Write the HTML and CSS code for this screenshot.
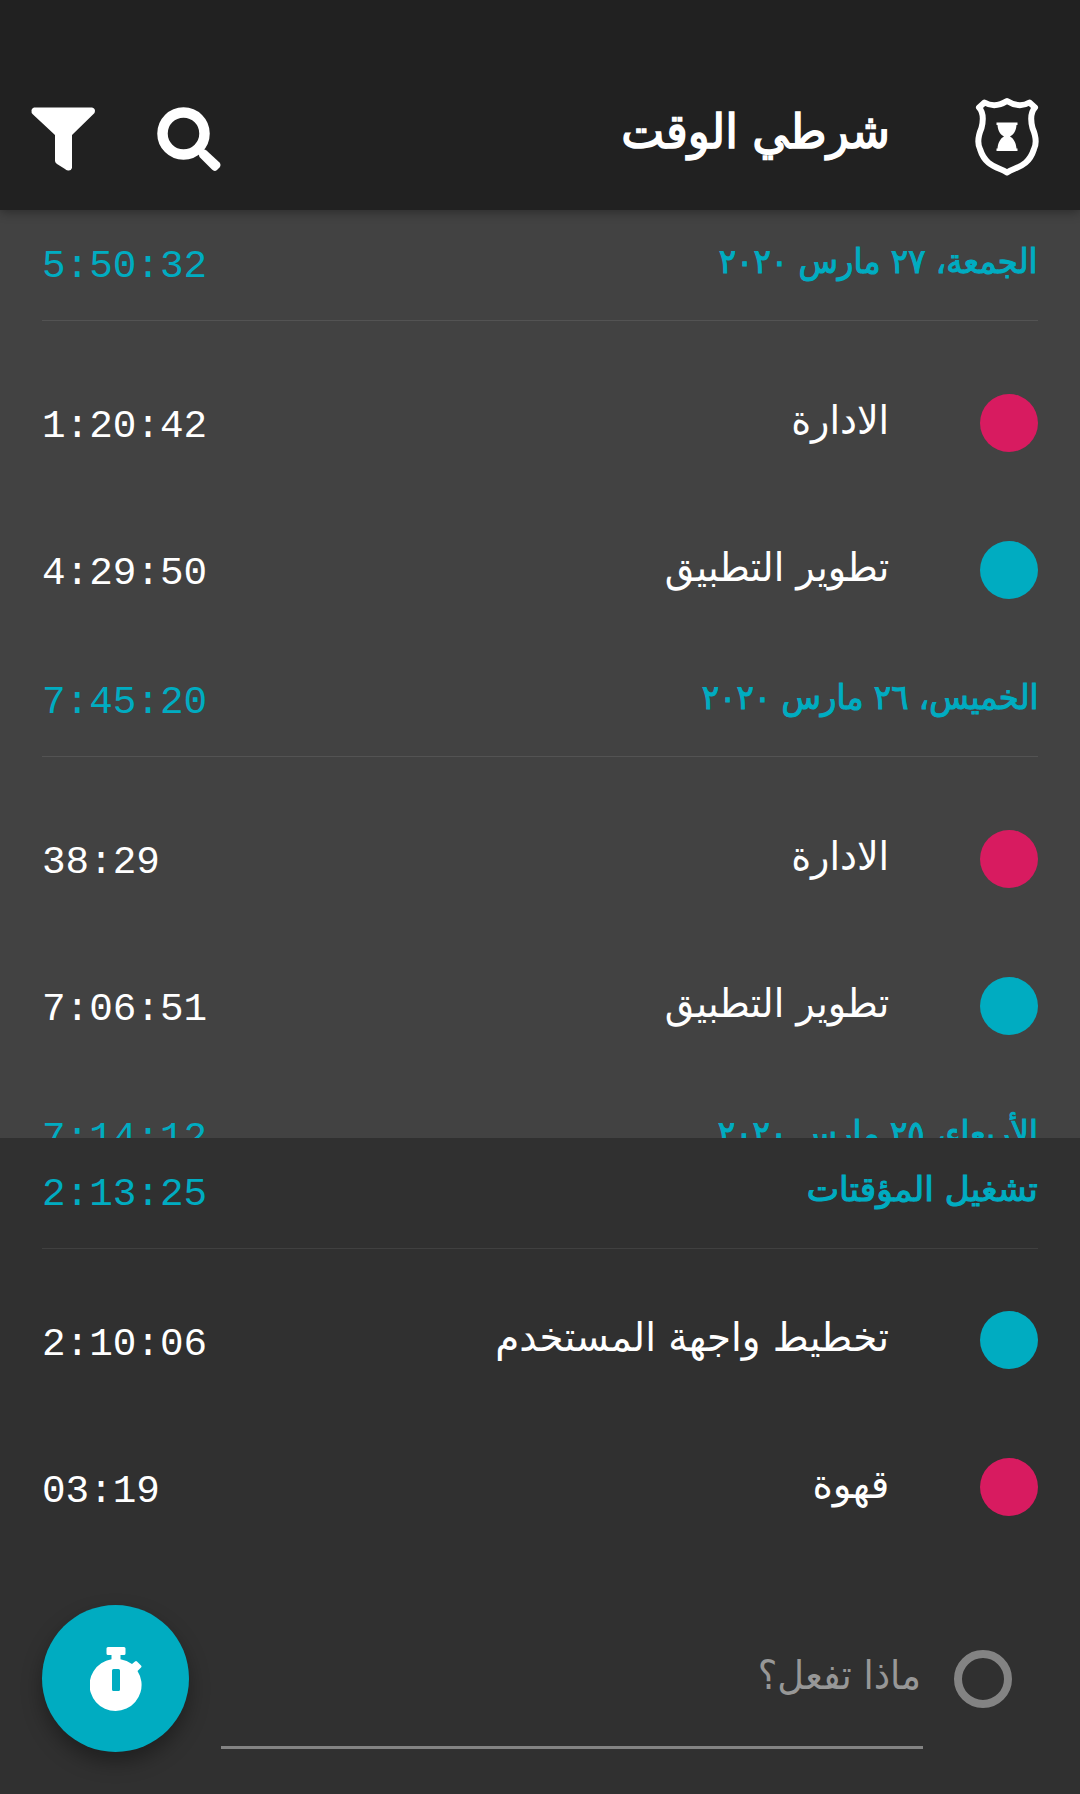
FILE: index.html
```html
<!DOCTYPE html>
<html lang="ar" dir="rtl">
<head>
    <meta charset="UTF-8">
    <title>شرطي الوقت</title>
    <meta name="viewport" content="width=device-width, initial-scale=1.0">
    <link rel="stylesheet" href="styles.css">
</head>
<body>

<header class="app-bar">
    <svg class="logo" viewBox="0 0 64 80">
        <path class="shield" d="M32 4Q20 11.500 9.500 5.500L4 10.500Q10 17 6.500 31Q1 44 5 52C9 65 17 69 25 72Q29 73.500 32 75.500Q35 73.500 39 72C47 69 55 65 59 52Q63 44 57.500 31Q54 17 60 10.500L54.500 5.500Q44 11.500 32 4Z"/>
        <path d="M21.500 25.500H42.500V28H41.500C41 35 38 38 35 39.500C38 41 41 45 41.500 51.500H42.500V54H21.500V51.500H22.500C23 45 26 41 29 39.500C26 38 23 35 22.500 28H21.500Z"/>
    </svg>
    <h1 class="title">شرطي الوقت</h1>
    <div class="actions">
        <svg class="icon" viewBox="0 0 64 64">
            <circle class="lens" cx="26.500" cy="26.500" r="21"/>
            <path d="M43 43.500Q46 41 49.500 43.500L62.500 55.500Q64.500 58 62.500 60.500L60 63Q57.500 65 55 62.500L42.500 50Q41 46 43 43.500Z"/>
        </svg>
        <svg class="icon" viewBox="0 0 64 64">
            <path d="M3 0.500H61Q64 1 64 4Q64 6 62 7.500L41 28V61Q40 64 37 63.500Q35 63 34 62L26 57Q24 55.500 24 54V28L2 7.500Q0 6 0.500 3Q1 1 3 0.500Z"/>
        </svg>
    </div>
</header>

<main class="history">
    <section class="group">
        <div class="group-header">
            <h2>الجمعة، ٢٧ مارس ٢٠٢٠</h2>
            <span class="time">5:50:32</span>
        </div>
        <ul class="timers">
            <li class="timer"><span class="dot pink"></span><span class="name">الادارة</span><span class="time">1:20:42</span></li>
            <li class="timer"><span class="dot cyan"></span><span class="name">تطوير التطبيق</span><span class="time">4:29:50</span></li>
        </ul>
    </section>
    <section class="group">
        <div class="group-header">
            <h2>الخميس، ٢٦ مارس ٢٠٢٠</h2>
            <span class="time">7:45:20</span>
        </div>
        <ul class="timers">
            <li class="timer"><span class="dot pink"></span><span class="name">الادارة</span><span class="time">38:29</span></li>
            <li class="timer"><span class="dot cyan"></span><span class="name">تطوير التطبيق</span><span class="time">7:06:51</span></li>
        </ul>
    </section>
    <section class="group">
        <div class="group-header">
            <h2>الأربعاء، ٢٥ مارس ٢٠٢٠</h2>
            <span class="time">7:14:12</span>
        </div>
    </section>
</main>

<section class="running">
    <div class="group-header">
        <h2>تشغيل المؤقتات</h2>
        <span class="time">2:13:25</span>
    </div>
    <ul class="timers">
        <li class="timer"><span class="dot cyan"></span><span class="name">تخطيط واجهة المستخدم</span><span class="time">2:10:06</span></li>
        <li class="timer"><span class="dot pink"></span><span class="name">قهوة</span><span class="time">03:19</span></li>
    </ul>
</section>

<footer class="new-timer">
    <span class="ring"></span>
    <div class="field"><span class="hint">ماذا تفعل؟</span></div>
    <button class="start-btn" aria-label="ابدأ">
        <svg class="stopwatch" viewBox="0 0 52 64">
            <path fill-rule="evenodd" d="M18 0H34Q35.500 0 35.500 1.500V6.500Q35.500 8 34 8H30.500V12.300Q37 13.500 42 17L45 14.500Q46 13.500 47 14.500L51 18.500Q52 19.500 51 20.500L47.500 24A26 26 0 1 1 21.500 12.300V8H18Q16.500 8 16.500 6.500V1.500Q16.500 0 18 0ZM23.500 22Q22 22 22 23.500V42.500Q22 44 23.500 44H28.500Q30 44 30 42.500V23.500Q30 22 28.500 22Z"/>
        </svg>
    </button>
</footer>

</body>
</html>
```
FILE: styles.css
```css
* {
    margin: 0;
    padding: 0;
    box-sizing: border-box;
}

body {
    width: 1080px;
    height: 1794px;
    display: flex;
    flex-direction: column;
    overflow: hidden;
    background: #303030;
    color: #fff;
    font-family: 'DejaVu Sans', sans-serif;
}

.app-bar {
    height: 210px;
    flex-shrink: 0;
    display: flex;
    align-items: flex-start;
    padding: 97px 41px 0 31px;
    background: #212121;
    box-shadow: 0 2px 10px rgba(0,0,0,0.35);
    z-index: 1;
}

.logo {
    width: 64px;
    height: 80px;
    fill: #fff;
}

.shield {
    fill: none;
    stroke: #fff;
    stroke-width: 6;
    stroke-linejoin: round;
}

.title {
    margin-right: 85px;
    font-size: 48px;
    font-weight: normal;
    line-height: 68px;
    -webkit-text-stroke: 1.6px #fff;
    transform: scaleX(0.95);
    transform-origin: right;
}

.actions {
    display: flex;
    gap: 62px;
    margin: 10px auto 0 0;
}

.icon {
    width: 64px;
    height: 64px;
    fill: #fff;
}

.lens {
    fill: none;
    stroke: #fff;
    stroke-width: 10.5;
}

.history {
    height: 927.5px;
    flex-shrink: 0;
    overflow: hidden;
    background: #424242;
}

.group {
    height: 436px;
}

.group-header {
    height: 111px;
    display: flex;
    justify-content: space-between;
    margin: 0 42px;
    padding-top: 22px;
    border-bottom: 1px solid #535353;
    color: #00acc1;
}

h2 {
    font-size: 34px;
    font-weight: normal;
    line-height: 59px;
    -webkit-text-stroke: 1.1px #00acc1;
    transform: scaleX(0.95);
    transform-origin: right;
}

.time {
    direction: ltr;
    font-family: 'Liberation Mono', monospace;
    font-size: 39.3px;
    line-height: 69px;
}

.timers {
    list-style: none;
    padding-top: 28px;
}

.timer {
    height: 147px;
    display: flex;
    align-items: center;
    padding: 0 42px;
}

.dot {
    width: 58px;
    height: 58px;
    border-radius: 50%;
}

.pink {
    background: #d81b60;
}

.cyan {
    background: #00acc1;
}

.name {
    margin-right: 91px;
    padding-bottom: 6px;
    font-size: 40px;
    line-height: 60px;
    transform: scaleX(0.95);
    transform-origin: right;
}

.timer .time {
    margin-right: auto;
    padding-top: 8px;
}

.running {
    height: 422px;
    flex-shrink: 0;
}

.running .group-header {
    border-color: #404040;
}

.running h2 {
    transform: scaleX(1.01);
}

.running .name {
    transform: scaleX(0.97);
}

.running .timers {
    padding-top: 18px;
}

.new-timer {
    flex: 1;
    display: flex;
    align-items: flex-start;
    padding: 45px 68px 0 42px;
}

.ring {
    width: 58px;
    height: 58px;
    margin-top: 45px;
    border: 8px solid #838383;
    border-radius: 50%;
}

.field {
    width: 702px;
    height: 144px;
    margin-right: 31px;
    padding: 40px 2px 0;
    border-bottom: 3px solid #838383;
    color: #979797;
}

.hint {
    display: block;
    font-size: 40px;
    line-height: 60px;
    transform: scaleX(0.92);
    transform-origin: right;
}

.start-btn {
    width: 147px;
    height: 147px;
    margin-right: auto;
    display: flex;
    justify-content: center;
    padding-top: 42px;
    border: none;
    border-radius: 50%;
    background: #00acc1;
    box-shadow: 0 10px 20px rgba(0,0,0,0.35);
}

.stopwatch {
    width: 52px;
    height: 64px;
    fill: #fff;
}
```
